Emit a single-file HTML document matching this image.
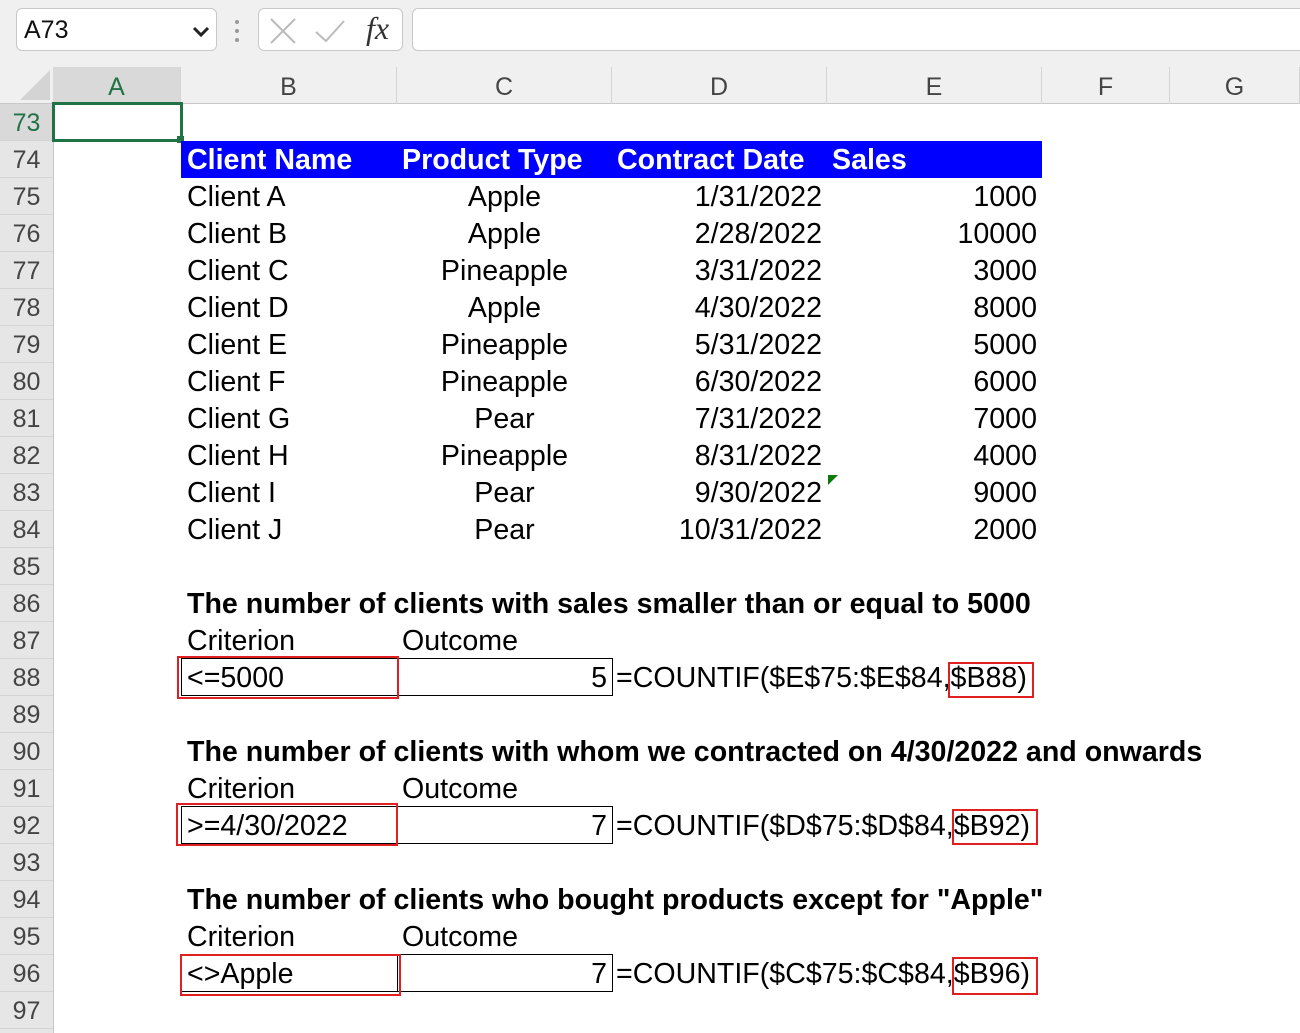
<!DOCTYPE html><html><head><style>
body{margin:0;width:1300px;height:1033px;overflow:hidden;background:#fff;font-family:"Liberation Sans",Arial,sans-serif;position:relative}
.a{position:absolute;white-space:nowrap}
.t{position:absolute;font-size:28.6px;line-height:37px;height:37px;white-space:nowrap;color:#000}
.r{text-align:right}.c{text-align:center}
.rh{position:absolute;left:0;width:53px;height:37px;background:#e6e6e6;color:#444;font-size:25px;line-height:38px;text-align:center;border-bottom:1px solid #d4d4d4;box-sizing:border-box}
.ch{position:absolute;top:67px;height:37px;color:#444;font-size:25px;line-height:40px;text-align:center;border-right:1px solid #d4d4d4;box-sizing:border-box}
.box{position:absolute;box-sizing:border-box}
</style></head><body>
<div class="a" style="left:0;top:0;width:1300px;height:66px;background:#f0f0f0"></div>
<div class="box" style="left:16px;top:8px;width:201px;height:43px;background:#fff;border:1px solid #c8c8c8;border-radius:6px"></div>
<div class="a" style="left:24px;top:16px;font-size:25px;color:#111">A73</div>
<svg class="a" style="left:190px;top:22px" width="24" height="18"><path d="M4 6l7 7 7-7" stroke="#222" stroke-width="3" fill="none"/></svg>
<div class="a" style="left:235px;top:20px;width:5px;height:22px;border-left:4px dotted #999"></div>
<div class="box" style="left:258px;top:8px;width:145px;height:43px;background:#fff;border:1px solid #c8c8c8;border-radius:6px"></div>
<svg class="a" style="left:268px;top:16px" width="100" height="30"><path d="M3 3l24 24M27 3L3 27" stroke="#bbb" stroke-width="2"/><path d="M48 16l10 9 18-20" stroke="#bbb" stroke-width="2" fill="none"/></svg>
<div class="a" style="left:366px;top:10px;font-size:32px;font-style:italic;font-family:'Liberation Serif',serif;color:#333">fx</div>
<div class="box" style="left:412px;top:8px;width:900px;height:43px;background:#fff;border:1px solid #c8c8c8;border-radius:6px"></div>
<div class="a" style="left:0;top:66px;width:1300px;height:38px;background:#f0f0f0;border-bottom:1px solid #c8c8c8;box-sizing:border-box"></div>
<svg class="a" style="left:18px;top:70px" width="32" height="30"><path d="M32 0V30H2z" fill="#d4d4d4"/></svg>
<div class="ch" style="left:53px;width:128px;background:#d9d9d9;color:#217346;border-bottom:2px solid #217346">A</div>
<div class="ch" style="left:181px;width:216px">B</div>
<div class="ch" style="left:397px;width:215px">C</div>
<div class="ch" style="left:612px;width:215px">D</div>
<div class="ch" style="left:827px;width:215px">E</div>
<div class="ch" style="left:1042px;width:128px">F</div>
<div class="ch" style="left:1170px;width:130px">G</div>
<div class="a" style="left:0;top:104px;width:53px;height:929px;background:#e6e6e6;border-right:1px solid #c8c8c8"></div>
<div class="rh" style="top:104px;background:#d9d9d9;color:#217346">73</div>
<div class="rh" style="top:141px">74</div><div class="rh" style="top:178px">75</div><div class="rh" style="top:215px">76</div><div class="rh" style="top:252px">77</div><div class="rh" style="top:289px">78</div><div class="rh" style="top:326px">79</div><div class="rh" style="top:363px">80</div><div class="rh" style="top:400px">81</div><div class="rh" style="top:437px">82</div><div class="rh" style="top:474px">83</div><div class="rh" style="top:511px">84</div><div class="rh" style="top:548px">85</div><div class="rh" style="top:585px">86</div><div class="rh" style="top:622px">87</div><div class="rh" style="top:659px">88</div><div class="rh" style="top:696px">89</div><div class="rh" style="top:733px">90</div><div class="rh" style="top:770px">91</div><div class="rh" style="top:807px">92</div><div class="rh" style="top:844px">93</div><div class="rh" style="top:881px">94</div><div class="rh" style="top:918px">95</div><div class="rh" style="top:955px">96</div><div class="rh" style="top:992px">97</div>
<div class="box" style="left:52px;top:102px;width:131px;height:40px;border:3px solid #217346"></div>
<div class="a" style="left:177px;top:136px;width:7px;height:7px;background:#217346"></div>
<div class="a" style="left:181px;top:141px;width:861px;height:37px;background:#0000ff"></div>
<div class="t" style="left:187px;top:142px;color:#fff;font-weight:bold">Client Name</div>
<div class="t" style="left:402px;top:142px;color:#fff;font-weight:bold">Product Type</div>
<div class="t" style="left:617px;top:142px;color:#fff;font-weight:bold">Contract Date</div>
<div class="t" style="left:832px;top:142px;color:#fff;font-weight:bold">Sales</div>
<div style="position:absolute;left:0;top:179px">
<div class="t" style="left:187px;top:0">Client A</div><div class="t c" style="left:397px;width:215px;top:0">Apple</div><div class="t r" style="left:612px;width:210px;top:0">1/31/2022</div><div class="t r" style="left:827px;width:210px;top:0">1000</div>
<div class="t" style="left:187px;top:37px">Client B</div><div class="t c" style="left:397px;width:215px;top:37px">Apple</div><div class="t r" style="left:612px;width:210px;top:37px">2/28/2022</div><div class="t r" style="left:827px;width:210px;top:37px">10000</div>
<div class="t" style="left:187px;top:74px">Client C</div><div class="t c" style="left:397px;width:215px;top:74px">Pineapple</div><div class="t r" style="left:612px;width:210px;top:74px">3/31/2022</div><div class="t r" style="left:827px;width:210px;top:74px">3000</div>
<div class="t" style="left:187px;top:111px">Client D</div><div class="t c" style="left:397px;width:215px;top:111px">Apple</div><div class="t r" style="left:612px;width:210px;top:111px">4/30/2022</div><div class="t r" style="left:827px;width:210px;top:111px">8000</div>
<div class="t" style="left:187px;top:148px">Client E</div><div class="t c" style="left:397px;width:215px;top:148px">Pineapple</div><div class="t r" style="left:612px;width:210px;top:148px">5/31/2022</div><div class="t r" style="left:827px;width:210px;top:148px">5000</div>
<div class="t" style="left:187px;top:185px">Client F</div><div class="t c" style="left:397px;width:215px;top:185px">Pineapple</div><div class="t r" style="left:612px;width:210px;top:185px">6/30/2022</div><div class="t r" style="left:827px;width:210px;top:185px">6000</div>
<div class="t" style="left:187px;top:222px">Client G</div><div class="t c" style="left:397px;width:215px;top:222px">Pear</div><div class="t r" style="left:612px;width:210px;top:222px">7/31/2022</div><div class="t r" style="left:827px;width:210px;top:222px">7000</div>
<div class="t" style="left:187px;top:259px">Client H</div><div class="t c" style="left:397px;width:215px;top:259px">Pineapple</div><div class="t r" style="left:612px;width:210px;top:259px">8/31/2022</div><div class="t r" style="left:827px;width:210px;top:259px">4000</div>
<div class="t" style="left:187px;top:296px">Client I</div><div class="t c" style="left:397px;width:215px;top:296px">Pear</div><div class="t r" style="left:612px;width:210px;top:296px">9/30/2022</div><div class="t r" style="left:827px;width:210px;top:296px">9000</div>
<div class="t" style="left:187px;top:333px">Client J</div><div class="t c" style="left:397px;width:215px;top:333px">Pear</div><div class="t r" style="left:612px;width:210px;top:333px">10/31/2022</div><div class="t r" style="left:827px;width:210px;top:333px">2000</div>
</div>
<svg class="a" style="left:828px;top:475px" width="10" height="10"><path d="M0 0H10L0 10z" fill="#0a7a0a"/></svg>

<div class="t" style="left:187px;top:586px;font-weight:bold">The number of clients with sales smaller than or equal to 5000</div>
<div class="t" style="left:187px;top:623px">Criterion</div><div class="t" style="left:402px;top:623px">Outcome</div>
<div class="box" style="left:181px;top:658px;width:217px;height:38px;border:1px solid #000"></div>
<div class="box" style="left:397px;top:658px;width:216px;height:38px;border:1px solid #000"></div>
<div class="t" style="left:187px;top:660px">&lt;=5000</div><div class="t r" style="left:397px;width:210px;top:660px">5</div>
<div class="t" style="left:616px;top:660px">=COUNTIF($E$75:$E$84,$B88)</div>
<div class="box" style="left:177px;top:656px;width:222px;height:43px;border:2px solid #e02020"></div>
<div class="box" style="left:948px;top:662px;width:86px;height:36px;border:2px solid #e02020"></div>

<div class="t" style="left:187px;top:734px;font-weight:bold">The number of clients with whom we contracted on 4/30/2022 and onwards</div>
<div class="t" style="left:187px;top:771px">Criterion</div><div class="t" style="left:402px;top:771px">Outcome</div>
<div class="box" style="left:181px;top:806px;width:217px;height:38px;border:1px solid #000"></div>
<div class="box" style="left:397px;top:806px;width:216px;height:38px;border:1px solid #000"></div>
<div class="t" style="left:187px;top:808px">&gt;=4/30/2022</div><div class="t r" style="left:397px;width:210px;top:808px">7</div>
<div class="t" style="left:616px;top:808px">=COUNTIF($D$75:$D$84,$B92)</div>
<div class="box" style="left:176px;top:803px;width:222px;height:43px;border:2px solid #e02020"></div>
<div class="box" style="left:952px;top:809px;width:86px;height:36px;border:2px solid #e02020"></div>

<div class="t" style="left:187px;top:882px;font-weight:bold">The number of clients who bought products except for "Apple"</div>
<div class="t" style="left:187px;top:919px">Criterion</div><div class="t" style="left:402px;top:919px">Outcome</div>
<div class="box" style="left:181px;top:954px;width:217px;height:38px;border:1px solid #000"></div>
<div class="box" style="left:397px;top:954px;width:216px;height:38px;border:1px solid #000"></div>
<div class="t" style="left:187px;top:956px">&lt;&gt;Apple</div><div class="t r" style="left:397px;width:210px;top:956px">7</div>
<div class="t" style="left:616px;top:956px">=COUNTIF($C$75:$C$84,$B96)</div>
<div class="box" style="left:180px;top:954px;width:221px;height:42px;border:2px solid #e02020"></div>
<div class="box" style="left:952px;top:957px;width:86px;height:38px;border:2px solid #e02020"></div>
</body></html>
